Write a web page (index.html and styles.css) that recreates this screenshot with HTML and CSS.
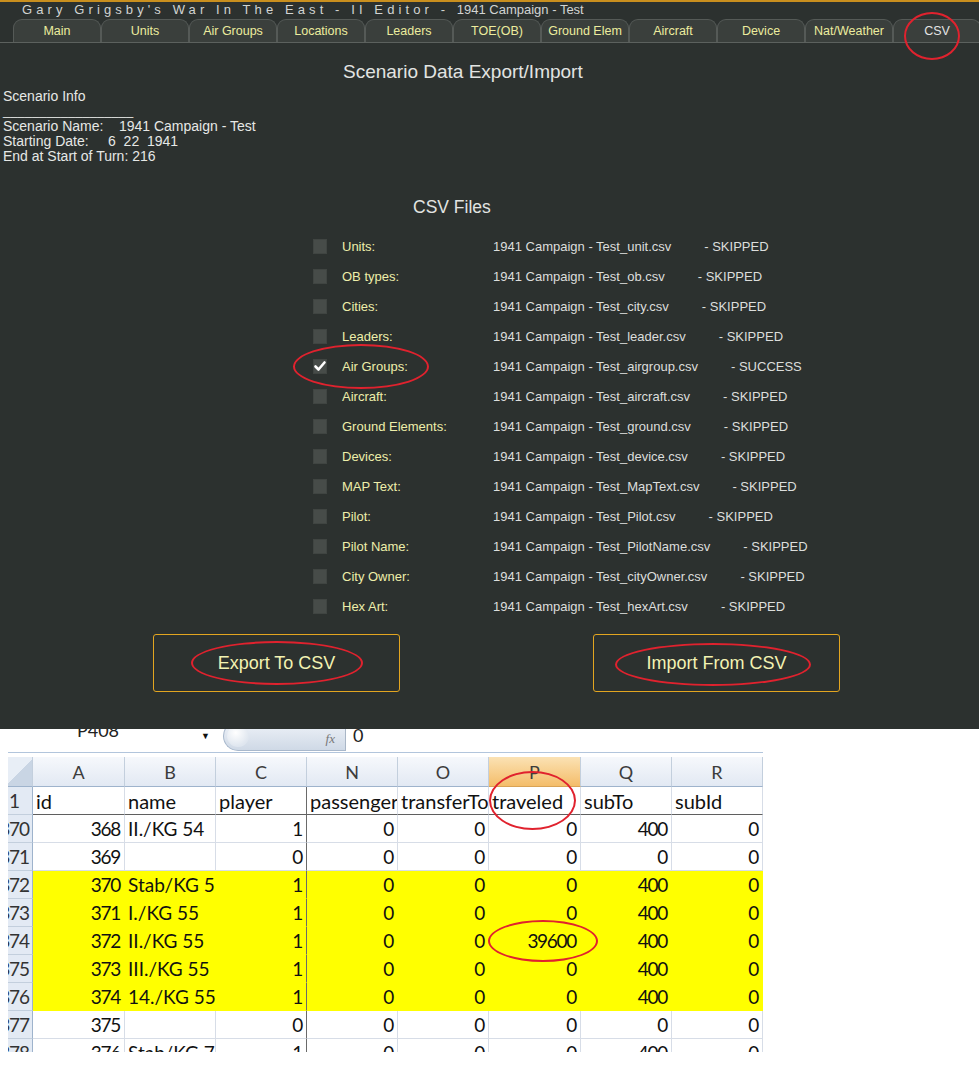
FILE: index.html
```html
<!DOCTYPE html>
<html>
<head>
<meta charset="utf-8">
<title>Scenario Data Export/Import</title>
<link rel="stylesheet" href="styles.css">
</head>
<body>
<div class="editor">
  <div class="titlebar"><span class="spaced">Gary Grigsby's War In The East - II Editor - </span><span class="scen">1941 Campaign - Test</span></div>
  <div class="tabs">
    <div class="tab">Main</div>
    <div class="tab">Units</div>
    <div class="tab">Air Groups</div>
    <div class="tab">Locations</div>
    <div class="tab">Leaders</div>
    <div class="tab">TOE(OB)</div>
    <div class="tab">Ground Elem</div>
    <div class="tab">Aircraft</div>
    <div class="tab">Device</div>
    <div class="tab">Nat/Weather</div>
    <div class="tab active">CSV<span class="ring ring-tab"></span></div>
  </div>

  <h1 class="page-title">Scenario Data Export/Import</h1>

  <div class="info">
    <div class="line">Scenario Info</div>
    <div class="line underline">__________________</div>
    <div class="line">Scenario Name:    1941 Campaign - Test</div>
    <div class="line">Starting Date:     6  22  1941</div>
    <div class="line">End at Start of Turn: 216</div>
  </div>

  <h2 class="files-title">CSV Files</h2>

  <div class="files">
    <div class="file-row"><span class="check"></span><span class="label">Units:</span><span class="fname">1941 Campaign - Test_unit.csv</span><span class="status">- SKIPPED</span></div>
    <div class="file-row"><span class="check"></span><span class="label">OB types:</span><span class="fname">1941 Campaign - Test_ob.csv</span><span class="status">- SKIPPED</span></div>
    <div class="file-row"><span class="check"></span><span class="label">Cities:</span><span class="fname">1941 Campaign - Test_city.csv</span><span class="status">- SKIPPED</span></div>
    <div class="file-row"><span class="check"></span><span class="label">Leaders:</span><span class="fname">1941 Campaign - Test_leader.csv</span><span class="status">- SKIPPED</span></div>
    <div class="file-row"><span class="check checked"><svg viewBox="0 0 14 14" width="14" height="14"><path d="M2.5 7.5 L5.5 10.5 L11.5 3.5" fill="none" stroke="#ffffff" stroke-width="2.6" stroke-linecap="round" stroke-linejoin="round"/></svg></span><span class="label">Air Groups:</span><span class="fname">1941 Campaign - Test_airgroup.csv</span><span class="status">- SUCCESS</span><span class="ring ring-row"></span></div>
    <div class="file-row"><span class="check"></span><span class="label">Aircraft:</span><span class="fname">1941 Campaign - Test_aircraft.csv</span><span class="status">- SKIPPED</span></div>
    <div class="file-row"><span class="check"></span><span class="label">Ground Elements:</span><span class="fname">1941 Campaign - Test_ground.csv</span><span class="status">- SKIPPED</span></div>
    <div class="file-row"><span class="check"></span><span class="label">Devices:</span><span class="fname">1941 Campaign - Test_device.csv</span><span class="status">- SKIPPED</span></div>
    <div class="file-row"><span class="check"></span><span class="label">MAP Text:</span><span class="fname">1941 Campaign - Test_MapText.csv</span><span class="status">- SKIPPED</span></div>
    <div class="file-row"><span class="check"></span><span class="label">Pilot:</span><span class="fname">1941 Campaign - Test_Pilot.csv</span><span class="status">- SKIPPED</span></div>
    <div class="file-row"><span class="check"></span><span class="label">Pilot Name:</span><span class="fname">1941 Campaign - Test_PilotName.csv</span><span class="status">- SKIPPED</span></div>
    <div class="file-row"><span class="check"></span><span class="label">City Owner:</span><span class="fname">1941 Campaign - Test_cityOwner.csv</span><span class="status">- SKIPPED</span></div>
    <div class="file-row"><span class="check"></span><span class="label">Hex Art:</span><span class="fname">1941 Campaign - Test_hexArt.csv</span><span class="status">- SKIPPED</span></div>
  </div>

  <div class="actions">
    <button class="btn">Export To CSV<span class="ring ring-export"></span></button>
    <button class="btn">Import From CSV<span class="ring ring-import"></span></button>
  </div>
</div>

<div class="sheet">
  <div class="formula-bar">
    <div class="namebox">P408</div>
    <div class="nb-arrow">&#9660;</div>
    <div class="fx-pill"><span class="orb"></span><span class="fx">fx</span></div>
    <div class="fvalue">0</div>
  </div>
  <div class="grid">
    <div class="hd corner"></div>
    <div class="hd">A</div><div class="hd">B</div><div class="hd">C</div><div class="hd">N</div><div class="hd">O</div><div class="hd sel">P</div><div class="hd">Q</div><div class="hd">R</div>

    <div class="rh"><span>1</span></div>
    <div class="c t r1">id</div><div class="c t r1">name</div><div class="c t r1 frz">player</div><div class="c t r1">passenger</div><div class="c t r1">transferTo</div><div class="c t r1 host">traveled<span class="ring ring-trav"></span></div><div class="c t r1">subTo</div><div class="c t r1">subId</div>

    <div class="rh"><span>370</span></div>
    <div class="c n">368</div><div class="c t">II./KG 54</div><div class="c n frz">1</div><div class="c n">0</div><div class="c n">0</div><div class="c n">0</div><div class="c n">400</div><div class="c n">0</div>

    <div class="rh"><span>371</span></div>
    <div class="c n">369</div><div class="c t"></div><div class="c n frz">0</div><div class="c n">0</div><div class="c n">0</div><div class="c n">0</div><div class="c n">0</div><div class="c n">0</div>

    <div class="rh"><span>372</span></div>
    <div class="c n y">370</div><div class="c t y">Stab/KG 55</div><div class="c n y frz">1</div><div class="c n y">0</div><div class="c n y">0</div><div class="c n y">0</div><div class="c n y">400</div><div class="c n y">0</div>

    <div class="rh"><span>373</span></div>
    <div class="c n y">371</div><div class="c t y">I./KG 55</div><div class="c n y frz">1</div><div class="c n y">0</div><div class="c n y">0</div><div class="c n y">0</div><div class="c n y">400</div><div class="c n y">0</div>

    <div class="rh"><span>374</span></div>
    <div class="c n y">372</div><div class="c t y">II./KG 55</div><div class="c n y frz">1</div><div class="c n y">0</div><div class="c n y">0</div><div class="c n y host">39600<span class="ring ring-val"></span></div><div class="c n y">400</div><div class="c n y">0</div>

    <div class="rh"><span>375</span></div>
    <div class="c n y">373</div><div class="c t y">III./KG 55</div><div class="c n y frz">1</div><div class="c n y">0</div><div class="c n y">0</div><div class="c n y">0</div><div class="c n y">400</div><div class="c n y">0</div>

    <div class="rh"><span>376</span></div>
    <div class="c n y">374</div><div class="c t y">14./KG 55</div><div class="c n y frz">1</div><div class="c n y">0</div><div class="c n y">0</div><div class="c n y">0</div><div class="c n y">400</div><div class="c n y">0</div>

    <div class="rh"><span>377</span></div>
    <div class="c n">375</div><div class="c t"></div><div class="c n frz">0</div><div class="c n">0</div><div class="c n">0</div><div class="c n">0</div><div class="c n">0</div><div class="c n">0</div>

    <div class="rh"><span>378</span></div>
    <div class="c n">376</div><div class="c t">Stab/KG 77</div><div class="c n frz">1</div><div class="c n">0</div><div class="c n">0</div><div class="c n">0</div><div class="c n">400</div><div class="c n">0</div>
  </div>
</div>
</body>
</html>
```

FILE: styles.css
```css
* { box-sizing: border-box; }

body {
  margin: 0;
  width: 979px;
  height: 1070px;
  overflow: hidden;
  background: #ffffff;
}

/* ---------- dark editor panel ---------- */
.editor {
  height: 729px;
  background: #2c312f;
  color: #dcdedc;
  font-family: "Liberation Sans", Arial, sans-serif;
  overflow: hidden;
}

.titlebar {
  height: 19px;
  border-top: 2px solid #c98f1e;
  padding-left: 22px;
  font-size: 13px;
  line-height: 16px;
  color: #d2d4d2;
  white-space: pre;
}
.spaced { letter-spacing: 4.1px; }

.tabs {
  display: flex;
  height: 24px;
  padding-left: 13px;
  border-bottom: 1px solid #5c615e;
}
.tab {
  flex: 0 0 88px;
  height: 23px;
  position: relative;
  border: 1px solid #555a57;
  border-bottom: none;
  border-radius: 9px 9px 0 0;
  background: #3a3f3c;
  color: #ecec9e;
  font-size: 12.5px;
  line-height: 23px;
  text-align: center;
}
.tab.active { color: #e4e4e4; }

.ring {
  position: absolute;
  border: 2px solid #e0222e;
  border-radius: 50%;
  pointer-events: none;
}
.ring-tab { left: 10px; top: -8px; width: 56px; height: 48px; }

.page-title {
  margin: 18px 0 0 343px;
  font-size: 19px;
  font-weight: normal;
  line-height: 22px;
  color: #e2e4e2;
}

.info {
  margin-top: 6px;
  padding-left: 3px;
  font-size: 14px;
  line-height: 15px;
  color: #e6e8e6;
}
.info .line { white-space: pre; height: 15px; }
.info .underline { font-size: 13px; line-height: 13px; }

.files-title {
  margin: 32px 0 0 413px;
  font-size: 17.5px;
  font-weight: normal;
  line-height: 22px;
  color: #e2e4e2;
}

.files {
  margin-top: 13px;
  padding-left: 313px;
}
.file-row {
  position: relative;
  display: flex;
  align-items: center;
  height: 30px;
  font-size: 13px;
  white-space: nowrap;
}
.check {
  flex: 0 0 14px;
  height: 15px;
  background: #474c49;
  box-shadow: inset 0 0 0 1px #404542;
  display: flex;
}
.label {
  flex: 0 0 151px;
  margin-left: 15px;
  color: #eeeeaa;
}
.fname { color: #dcdedc; }
.status { margin-left: 33px; color: #dcdedc; }
.ring-row { left: -20px; top: -7px; width: 136px; height: 45px; }

.actions {
  display: flex;
  gap: 193px;
  margin-top: 13px;
  padding-left: 153px;
}
.btn {
  position: relative;
  width: 247px;
  height: 58px;
  background: transparent;
  border: 1px solid #e2a520;
  border-radius: 3px;
  color: #f3f3b2;
  font-family: "Liberation Sans", Arial, sans-serif;
  font-size: 18px;
  padding: 0;
}
.ring-export { left: 37px; top: 6px; width: 172px; height: 44px; }
.ring-import { left: 21px; top: 8px; width: 196px; height: 43px; }

/* ---------- spreadsheet ---------- */
.sheet {
  margin-left: 8px;
  width: 755px;
  font-family: Lato, "Liberation Sans", sans-serif;
  color: #111;
}

.formula-bar {
  display: flex;
  height: 24px;
  border-bottom: 1px solid #b2c5dc;
  overflow: hidden;
}
.namebox {
  flex: 0 0 180px;
  margin-top: -9px;
  height: 24px;
  text-align: center;
  font-size: 18px;
  line-height: 20px;
  color: #222;
}
.nb-arrow {
  flex: 0 0 35px;
  font-size: 9px;
  line-height: 14px;
  text-align: center;
  color: #111;
}
.fx-pill {
  flex: 0 0 122px;
  position: relative;
  height: 30px;
  margin-top: -8px;
  border: 1px solid #a8b8cc;
  border-right: none;
  border-radius: 15px 0 0 15px;
  background: linear-gradient(#eef2f8, #cfd9e6);
  display: flex;
  align-items: center;
  justify-content: flex-end;
}
.orb {
  position: absolute;
  left: 3px;
  top: 3px;
  width: 22px;
  height: 22px;
  border-radius: 50%;
  background: radial-gradient(circle at 40% 35%, #ffffff, #dfe6ef 70%);
}
.fx {
  margin: 6px 10px 0 0;
  font-family: "Liberation Serif", serif;
  font-style: italic;
  font-size: 13px;
  color: #777;
}
.fvalue {
  border-left: 1px solid #a9b6c6;
  padding-left: 7px;
  font-size: 18px;
  line-height: 12px;
  color: #222;
  height: 22px;
}

.grid {
  margin-top: 4px;
  display: grid;
  grid-template-columns: 25px 92px 91px 91px 91px 91px 92px 91px 91px;
  grid-template-rows: 30px;
  grid-auto-rows: 28px;
  height: 295px;
  overflow: hidden;
  font-size: 19px;
}

.hd {
  background: linear-gradient(#f6f8fc, #e2e9f3);
  border-right: 1px solid #c3cfdd;
  border-bottom: 1px solid #9eb3cc;
  text-align: center;
  line-height: 30px;
  font-size: 18px;
  color: #3c3c3c;
}
.hd.sel {
  background: linear-gradient(#fbe2b4, #f4bd6a);
  border-bottom-color: #d9a355;
}
.corner {
  background: linear-gradient(135deg, #e8eef6 50%, #c9d5e4 50%);
}

.rh {
  background: #e3eaf4;
  border-right: 1px solid #9eb3cc;
  border-bottom: 1px solid #c3cfdd;
  overflow: hidden;
  line-height: 28px;
  font-size: 19px;
  color: #333;
}
.rh span {
  display: block;
  width: 34px;
  margin-left: -11px;
  text-align: center;
  letter-spacing: -1.2px;
}

.c {
  border-right: 1px solid #d7dde7;
  border-bottom: 1px solid #d7dde7;
  line-height: 28px;
  white-space: nowrap;
  overflow: hidden;
  position: relative;
}
.c.t { padding-left: 3px; }
.c.t.r1 { font-size: 20px; }
.c.n { text-align: right; padding-right: 4px; letter-spacing: -1.3px; }
.c.r1 { border-bottom: 1px solid #5f5f5f; }
.c.frz { border-right: 1px solid #6a6a6a; }
.c.y { background: #ffff00; border-bottom-color: #ffff00; border-right-color: #ffff00; }
.c.y.frz { border-right-color: #6a6a6a; }
.c.host { overflow: visible; z-index: 2; }

.ring-trav { left: 0; top: -16px; width: 87px; height: 59px; }
.ring-val { left: -1px; top: -7px; width: 110px; height: 42px; letter-spacing: 0; }
```
